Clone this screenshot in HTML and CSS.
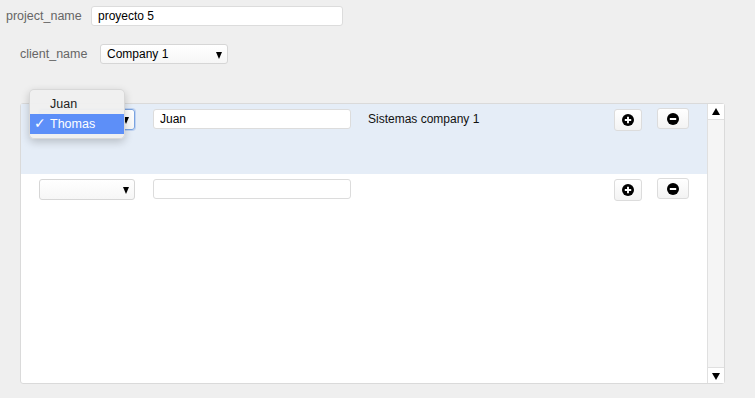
FILE: index.html
```html
<!DOCTYPE html>
<html lang="es">
  <head>
    <meta charset="UTF-8" />
    <title>Proyecto</title>
    <link rel="stylesheet" href="styles.css">
  </head>
  <body>
    <div class="page">
      <div class="field field-project">
        <label class="field-label">project_name</label>
        <input class="text-input project-input" type="text" value="proyecto 5" />
      </div>

      <div class="field field-client">
        <label class="field-label">client_name</label>
        <div class="select client-select">Company 1</div>
      </div>

      <div class="panel">
        <div class="rows">
          <div class="row row-active">
            <div class="select-wrap">
              <div class="select select-focus"></div>
              <!-- menu abierto del select -->
              <ul class="dropdown">
                <li class="dropdown-item">Juan</li>
                <li class="dropdown-item selected"><span class="check">✓</span>Thomas</li>
              </ul>
            </div>
            <input class="text-input row-input" type="text" value="Juan" />
            <div class="row-text">Sistemas company 1</div>
            <button class="icon-btn btn-add" type="button">
              <svg width="12" height="12" viewBox="0 0 12 12"><circle cx="6" cy="6" r="6" fill="#000"/><path d="M6 2.8v6.4M2.8 6h6.4" stroke="#fff" stroke-width="1.9"/></svg>
            </button>
            <button class="icon-btn btn-remove" type="button">
              <svg width="12" height="12" viewBox="0 0 12 12"><circle cx="6" cy="6" r="6" fill="#000"/><path d="M2.8 6h6.4" stroke="#fff" stroke-width="2"/></svg>
            </button>
          </div>

          <div class="row">
            <div class="select-wrap">
              <div class="select"></div>
            </div>
            <input class="text-input row-input" type="text" value="" />
            <div class="row-text"></div>
            <button class="icon-btn btn-add" type="button">
              <svg width="12" height="12" viewBox="0 0 12 12"><circle cx="6" cy="6" r="6" fill="#000"/><path d="M6 2.8v6.4M2.8 6h6.4" stroke="#fff" stroke-width="1.9"/></svg>
            </button>
            <button class="icon-btn btn-remove" type="button">
              <svg width="12" height="12" viewBox="0 0 12 12"><circle cx="6" cy="6" r="6" fill="#000"/><path d="M2.8 6h6.4" stroke="#fff" stroke-width="2"/></svg>
            </button>
          </div>
        </div>

        <div class="scrollbar">
          <div class="scroll-btn scroll-up"></div>
          <div class="scroll-track"></div>
          <div class="scroll-btn scroll-down"></div>
        </div>
      </div>
    </div>
  </body>
</html>
```

FILE: styles.css
```css
* {
  box-sizing: border-box;
  margin: 0;
  padding: 0;
}

body {
  background-color: #efefef;
  font-family: "Liberation Sans", Arial, sans-serif;
  font-size: 12px;
  color: #000;
}

.page {
  padding-top: 6px;
}

.field {
  display: flex;
  align-items: center;
}

.field-label {
  color: #666;
  font-size: 12.5px;
  line-height: 20px;
}

.field-project {
  padding-left: 6px;
}

.field-project .field-label {
  width: 85px;
}

.field-client {
  margin-top: 18px;
  padding-left: 20px;
}

.field-client .field-label {
  width: 80px;
}

.text-input {
  height: 20px;
  border: 1px solid #dcdcdc;
  border-radius: 3px;
  background: #fff;
  padding: 0 6px;
  font-family: inherit;
  font-size: 12px;
  color: #000;
  outline: none;
}

.project-input {
  width: 252px;
}

.select {
  position: relative;
  height: 21px;
  line-height: 19px;
  border: 1px solid #d6d6d6;
  border-radius: 3px;
  background: linear-gradient(#fff, #f6f6f6);
  padding: 0 20px 0 6px;
  white-space: nowrap;
  overflow: hidden;
}

.select::after {
  content: "";
  position: absolute;
  right: 5px;
  top: 7px;
  border-left: 3.5px solid transparent;
  border-right: 3.5px solid transparent;
  border-top: 7px solid #000;
}

.client-select {
  width: 128px;
  height: 20px;
  line-height: 18px;
}

.select-focus {
  border-color: #7aa3e0;
  box-shadow: 0 0 0 1px rgba(120, 160, 230, 0.35);
}

/* Panel de filas */
.panel {
  display: flex;
  margin: 39px 0 0 20px;
  width: 705px;
  height: 281px;
  border: 1px solid #dadada;
  border-radius: 3px;
  background: #fff;
}

.rows {
  flex: 1;
}

.row {
  display: flex;
  align-items: flex-start;
  height: 70px;
  padding: 5px 18px 0 18px;
}

.row-active {
  background: #e5edf7;
}

.select-wrap {
  position: relative;
  width: 96px;
}

.row-input {
  width: 198px;
  margin-left: 18px;
}

.row-text {
  flex: 1;
  margin-left: 17px;
  line-height: 20px;
  color: #111;
}

.icon-btn {
  display: flex;
  align-items: center;
  justify-content: center;
  border: 1px solid #dcdcdc;
  border-radius: 3px;
  background: linear-gradient(#fff, #f3f3f3);
  cursor: pointer;
}

.btn-add {
  width: 28px;
  height: 22px;
}

.btn-remove {
  width: 32px;
  height: 21px;
  margin-left: 15px;
  margin-top: -1px;
}

/* Menu desplegable */
.dropdown {
  position: absolute;
  left: -10px;
  top: -20px;
  width: 96px;
  padding: 4px 0;
  list-style: none;
  background: rgba(240, 240, 240, 0.97);
  border: 1px solid rgba(0, 0, 0, 0.1);
  border-radius: 5px;
  box-shadow: 0 3px 9px rgba(0, 0, 0, 0.2);
}

.dropdown-item {
  position: relative;
  height: 20px;
  line-height: 20px;
  padding-left: 20px;
  font-size: 12.5px;
  color: #222;
}

.dropdown-item.selected {
  background: #5d8ff8;
  color: #fff;
}

.check {
  position: absolute;
  left: 4px;
  top: -1px;
  font-family: "DejaVu Sans", sans-serif;
  font-size: 14px;
  font-weight: bold;
}

/* Barra de scroll */
.scrollbar {
  display: flex;
  flex-direction: column;
  width: 17px;
  border-left: 1px solid #e0e0e0;
  background: #f5f5f5;
}

.scroll-btn {
  position: relative;
  height: 16px;
  background: #fff;
}

.scroll-up {
  border-bottom: 1px solid #e0e0e0;
}

.scroll-down {
  border-top: 1px solid #e0e0e0;
}

.scroll-track {
  flex: 1;
}

.scroll-up::after,
.scroll-down::after {
  content: "";
  position: absolute;
  left: 4px;
  border-left: 4px solid transparent;
  border-right: 4px solid transparent;
}

.scroll-up::after {
  top: 4px;
  border-bottom: 7px solid #000;
}

.scroll-down::after {
  top: 5px;
  border-top: 7px solid #000;
}
```
